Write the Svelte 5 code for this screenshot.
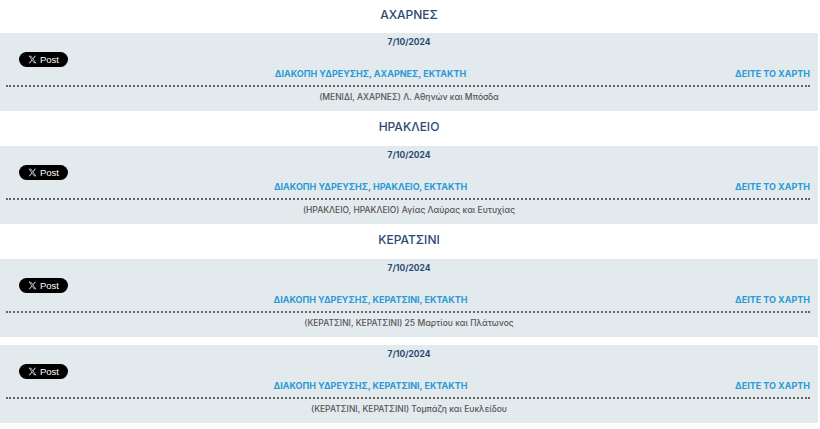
<script lang="ts">
	type Item = { area: string; city: string; street: string };
	type Group = { heading?: string; item: Item };

	const groups: Group[] = [
		{ heading: 'ΑΧΑΡΝΕΣ', item: { area: 'ΜΕΝΙΔΙ', city: 'ΑΧΑΡΝΕΣ', street: 'Λ. Αθηνών και Μπόσδα' } },
		{ heading: 'ΗΡΑΚΛΕΙΟ', item: { area: 'ΗΡΑΚΛΕΙΟ', city: 'ΗΡΑΚΛΕΙΟ', street: 'Αγίας Λαύρας και Ευτυχίας' } },
		{ heading: 'ΚΕΡΑΤΣΙΝΙ', item: { area: 'ΚΕΡΑΤΣΙΝΙ', city: 'ΚΕΡΑΤΣΙΝΙ', street: '25 Μαρτίου και Πλάτωνος' } },
		{ item: { area: 'ΚΕΡΑΤΣΙΝΙ', city: 'ΚΕΡΑΤΣΙΝΙ', street: 'Τομπάζη και Ευκλείδου' } }
	];
</script>

<main class="page">
	{#each groups as group}
		{#if group.heading}
			<h2 class="heading">{group.heading}</h2>
		{:else}
			<div class="spacer"></div>
		{/if}
		<section class="band">
			<div class="date">7/10/2024</div>
			<div class="row">
				<a class="post" href="#post">
					<svg viewBox="0 0 24 24" width="9" height="9" aria-hidden="true">
						<path fill="#ccc" d="M18.2 2.3h3.3l-7.2 8.2 8.5 11.2h-6.7l-5.2-6.8-6 6.8H1.7l7.7-8.8L1.3 2.3h6.8l4.7 6.2zm-1.2 17.5h1.8L7.1 4.1h-2z" />
					</svg>
					<span>Post</span>
				</a>
				<a class="title" href="#title">ΔΙΑΚΟΠΗ ΥΔΡΕΥΣΗΣ, {group.item.city}, ΕΚΤΑΚΤΗ</a>
				<a class="map" href="#map">ΔΕΙΤΕ ΤΟ ΧΑΡΤΗ</a>
			</div>
			<div class="address">({group.item.area}, {group.item.city}) {group.item.street}</div>
		</section>
	{/each}
</main>

<style>
	:global(body) {
		margin: 0;
		background: #fff;
	}

	.page {
		width: 818px;
		font-family: Inter, 'Noto Sans', sans-serif;
	}

	.heading {
		margin: 0;
		height: 35px;
		line-height: 32px;
		text-align: center;
		font-size: 12px;
		font-weight: 500;
		color: #2d4a73;
	}

	.heading:first-child {
		height: 33px;
		line-height: 29px;
	}

	.spacer {
		height: 8px;
	}

	.band {
		height: 78px;
		background: #e3eaee;
	}

	.date {
		height: 17px;
		line-height: 18px;
		text-align: center;
		font-size: 8.5px;
		font-weight: 700;
		color: #2d4a73;
	}

	.row {
		display: grid;
		grid-template-columns: 200px 329px 1fr;
		align-items: end;
		height: 35px;
		margin: 0 8px 0 6px;
		border-bottom: 2px dotted #666;
	}

	.post {
		align-self: start;
		margin: 2px 0 0 13px;
		width: 49px;
		height: 15px;
		border-radius: 8px;
		background: #000;
		color: #fff;
		display: flex;
		align-items: center;
		justify-content: center;
		gap: 3px;
		font-family: 'Liberation Sans', Arial, sans-serif;
		font-size: 9.5px;
		font-weight: 400;
		text-decoration: none;
	}

	.title,
	.map {
		font-size: 9px;
		font-weight: 700;
		line-height: 18px;
		margin-bottom: 2px;
		color: #2b9ad6;
		text-decoration: none;
		white-space: nowrap;
	}

	.title {
		text-align: center;
	}

	.map {
		text-align: right;
	}

	.address {
		height: 24px;
		line-height: 21px;
		text-align: center;
		font-size: 8.5px;
		font-weight: 500;
		color: #555;
	}
</style>
